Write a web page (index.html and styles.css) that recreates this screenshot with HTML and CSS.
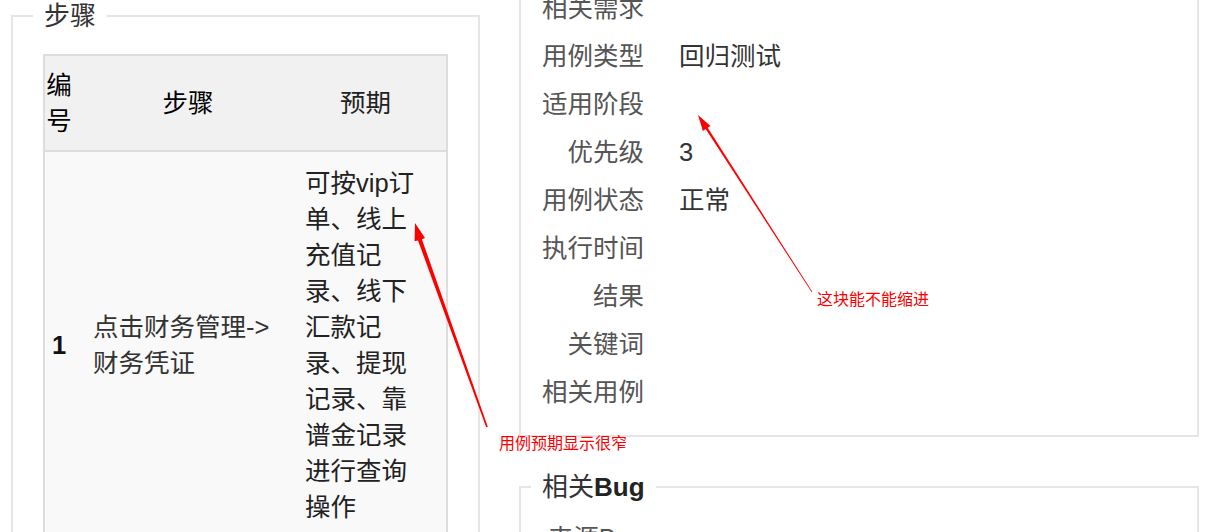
FILE: index.html
```html
<!DOCTYPE html>
<html lang="zh-CN">

<head>
  <meta charset="UTF-8">
  <meta name="viewport" content="width=device-width, initial-scale=1.0">
  <title>用例详情</title>
  <link rel="stylesheet" href="styles.css">
</head>

<body>
  <div class="page">
    <fieldset class="box box-steps">
      <legend>步骤</legend>
      <table class="steps">
        <thead>
          <tr>
            <th class="col-id">编号</th>
            <th class="col-step">步骤</th>
            <th class="col-expect">预期</th>
          </tr>
        </thead>
        <tbody>
          <tr>
            <td class="col-id">1</td>
            <td class="col-step">点击财务管理-&gt;财务凭证</td>
            <td class="col-expect">可按vip订单、线上充值记录、线下汇款记录、提现记录、靠谱金记录进行查询操作</td>
          </tr>
        </tbody>
      </table>
    </fieldset>

    <div class="side">
      <fieldset class="box box-info">
        <dl class="props">
          <dt>相关需求</dt>
          <dd></dd>
          <dt>用例类型</dt>
          <dd>回归测试</dd>
          <dt>适用阶段</dt>
          <dd></dd>
          <dt>优先级</dt>
          <dd>3</dd>
          <dt>用例状态</dt>
          <dd>正常</dd>
          <dt>执行时间</dt>
          <dd></dd>
          <dt>结果</dt>
          <dd></dd>
          <dt>关键词</dt>
          <dd></dd>
          <dt>相关用例</dt>
          <dd></dd>
        </dl>
      </fieldset>

      <fieldset class="box box-bugs">
        <legend>相关<b>Bug</b></legend>
        <dl class="props">
          <dt>来源Bug</dt>
          <dd></dd>
        </dl>
      </fieldset>
    </div>
  </div>

  <!-- review marks drawn over the page -->
  <svg class="marks" width="1219" height="532" viewBox="0 0 1219 532">
    <polygon points="415,223 425,238 421.9,239.2 487.8,426.7 486.2,427.3 418,240.5 414.6,241.2" />
    <polygon points="698,115 710.5,126 707.7,127.8 812.3,291.8 811.7,292.2 705.7,129.1 702.9,130.9" />
    <text x="499" y="449">用例预期显示很窄</text>
    <text x="817" y="305">这块能不能缩进</text>
  </svg>
</body>

</html>
```

FILE: styles.css
```css
html,
body {
  margin: 0;
  padding: 0;
  height: 532px;
  overflow: hidden;
}

body {
  position: relative;
  background: #ffffff;
  color: #333333;
  font-family: "Liberation Sans", "Noto Sans CJK SC", sans-serif;
  font-size: 25.5px;
}

.page {
  display: flex;
  align-items: flex-start;
  padding-left: 11px;
}

/* fieldset boxes */
.box {
  margin: 0;
  min-width: 0;
  border: 2px solid #e5e5e5;
  box-sizing: border-box;
}

.box legend {
  font-size: 26px;
  line-height: 32px;
  color: #333333;
  padding: 0 11px;
}

.box-steps {
  width: 469px;
  padding: 22px 30px 20px 30px;
  margin-right: 39px;
}

.box-steps legend {
  margin-left: -10px;
}

.side {
  width: 680px;
  margin-top: -30px;
}

.box-info {
  padding: 12px 20px 19px 21px;
}

.box-bugs {
  margin-top: 34px;
  padding: 11px 20px 20px 21px;
}

.box-bugs legend {
  margin-left: -11px;
}

.box-bugs legend b {
  color: #222222;
}

/* steps table */
.steps {
  width: 405px;
  table-layout: fixed;
  border: 2px solid #dddddd;
  border-spacing: 0;
  line-height: 36px;
}

.steps th,
.steps td {
  box-sizing: border-box;
  vertical-align: middle;
  padding: 11px 2px 11px 20px;
}

.steps th {
  background: #f1f1f1;
  color: #000000;
  font-weight: normal;
  text-align: center;
  border-bottom: 2px solid #dddddd;
}

.steps td {
  background: #f9f9f9;
  padding-top: 13px;
  padding-bottom: 13px;
  text-align: left;
}

.steps .col-id {
  width: 28px;
  padding-left: 1px;
  padding-right: 1px;
  text-align: center;
}

.steps td.col-id {
  font-weight: bold;
  color: #111111;
}

.steps .col-step {
  width: 212px;
}

.steps .col-expect {
  width: 161px;
  padding-right: 20px;
  color: #222222;
}

/* label / value list */
.props {
  display: grid;
  grid-template-columns: 102px 1fr;
  grid-auto-rows: 48px;
  column-gap: 35px;
  margin: 0;
  line-height: 48px;
}

.props dt {
  text-align: right;
  color: #555555;
  white-space: nowrap;
}

.props dd {
  margin: 0;
  color: #333333;
}

/* review marks */
.marks {
  position: absolute;
  left: 0;
  top: 0;
  pointer-events: none;
}

.marks polygon {
  fill: #ff0000;
}

.marks text {
  fill: #ff0000;
  font-family: "Noto Sans CJK SC", sans-serif;
  font-size: 16px;
}
```
